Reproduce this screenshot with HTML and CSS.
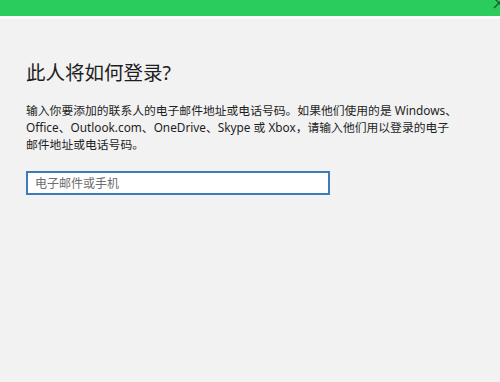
FILE: index.html
```html
<!DOCTYPE html>
<html lang="zh-CN">
<head>
  <meta charset="UTF-8" />
  <title>此人将如何登录?</title>
  <link rel="stylesheet" href="styles.css">
</head>
<body>
  <div class="titlebar">
    <svg class="close" width="14" height="14" viewBox="0 0 14 14">
      <path d="M2 -2 L12 8 M12 -2 L2 8" stroke="#1a5a2c" stroke-width="1.3" fill="none"/>
    </svg>
  </div>
  <div class="edge"></div>

  <main class="content">
    <h1>此人将如何登录?</h1>
    <p class="intro">输入你要添加的联系人的电子邮件地址或电话号码。如果他们使用的是 Windows、Office、Outlook.com、OneDrive、Skype 或 Xbox，请输入他们用以登录的电子<br>邮件地址或电话号码。</p>
    <input class="account" type="text" placeholder="电子邮件或手机" />
  </main>
</body>
</html>
```

FILE: styles.css
```css
:root {
  --green: #29cc5d;
  --bg: #f2f2f2;
  --text: #1e1e1e;
  --accent: #3b7cba;
}

*, *::before, *::after {
  box-sizing: border-box;
}

body {
  margin: 0;
  height: 382px;
  background: var(--bg);
  color: var(--text);
  font-family: "Noto Sans", "Noto Sans CJK SC", sans-serif;
  overflow: hidden;
}

.titlebar {
  position: relative;
  height: 16px;
  background: var(--green);
}
.titlebar .close {
  position: absolute;
  top: 0;
  right: -6px;
}

.edge {
  height: 3px;
  background: #fbfbfb;
}

.content {
  padding: 39px 26px 0;
}

h1 {
  margin: 0 0 14px;
  font-size: 19.5px;
  font-weight: 400;
  line-height: 30px;
}

.intro {
  margin: 0 0 18px;
  width: 440px;
  font-size: 11.8px;
  line-height: 17px;
}

.account {
  display: block;
  width: 304px;
  height: 24px;
  padding: 0 7px;
  border: 2px solid var(--accent);
  background: #fff;
  font-family: inherit;
  font-size: 12px;
  outline: none;
}
.account::placeholder {
  color: #6d6d6d;
}
```
